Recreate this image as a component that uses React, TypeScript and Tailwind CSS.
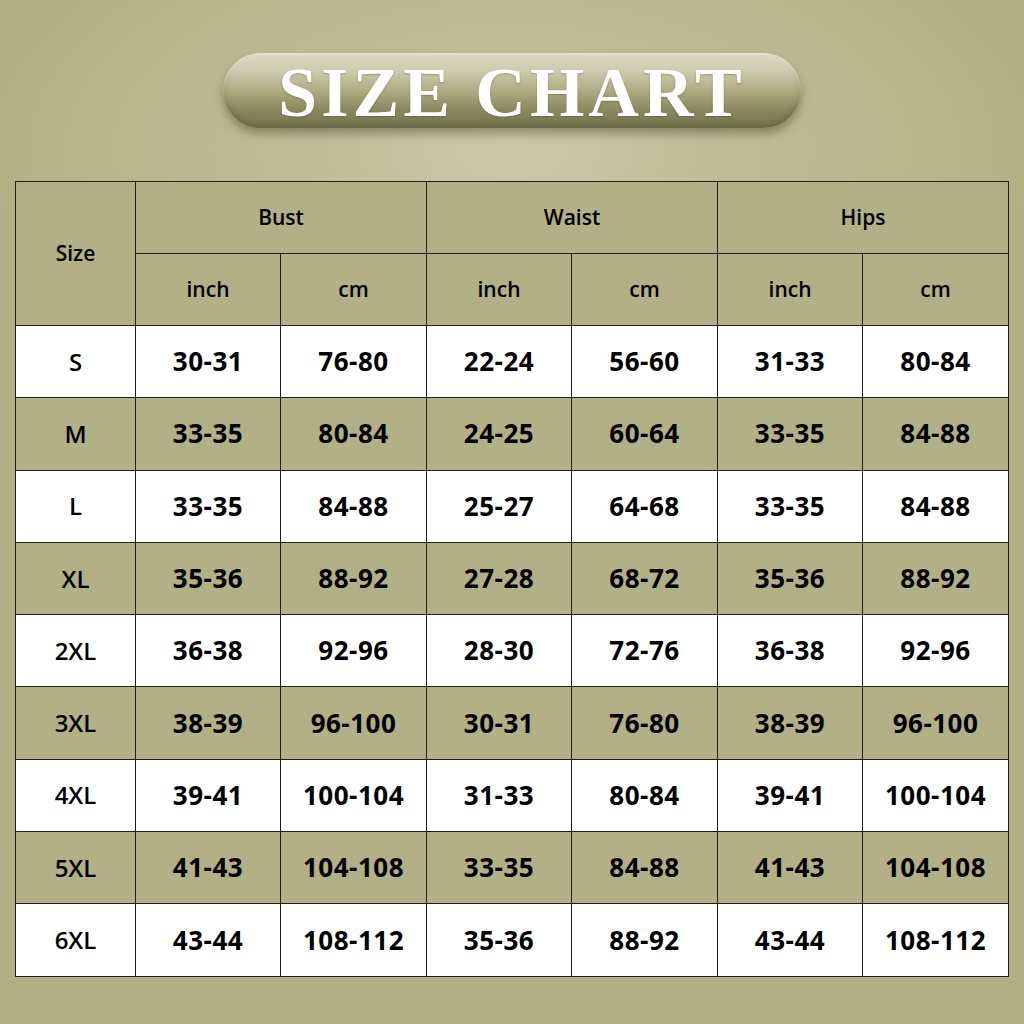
const rows = [
  ['S', '30-31', '76-80', '22-24', '56-60', '31-33', '80-84'],
  ['M', '33-35', '80-84', '24-25', '60-64', '33-35', '84-88'],
  ['L', '33-35', '84-88', '25-27', '64-68', '33-35', '84-88'],
  ['XL', '35-36', '88-92', '27-28', '68-72', '35-36', '88-92'],
  ['2XL', '36-38', '92-96', '28-30', '72-76', '36-38', '92-96'],
  ['3XL', '38-39', '96-100', '30-31', '76-80', '38-39', '96-100'],
  ['4XL', '39-41', '100-104', '31-33', '80-84', '39-41', '100-104'],
  ['5XL', '41-43', '104-108', '33-35', '84-88', '41-43', '104-108'],
  ['6XL', '43-44', '108-112', '35-36', '88-92', '43-44', '108-112'],
]

const groups = ['Bust', 'Waist', 'Hips']

export default function App() {
  return (
    <div className="relative w-[1024px] h-[1024px] overflow-hidden bg-[#b2b186] bg-[radial-gradient(ellipse_520px_260px_at_512px_150px,#cbcaa8_0%,#bdbc95_45%,#b2b186_100%)]">
      {/* title pill */}
      <div className="flex justify-center pt-[53px]">
        <div className="w-[578px] h-[75px] rounded-full bg-[linear-gradient(180deg,#dad9c1_0%,#cfcdb0_22%,#aeac83_50%,#8a895f_75%,#76764f_100%)] shadow-[0_6px_10px_rgba(70,70,40,0.45),inset_0_2px_3px_rgba(255,255,240,0.4),inset_0_-3px_6px_rgba(60,60,30,0.3)] flex items-center justify-center">
          <span className="text-white font-bold text-[70px] leading-none tracking-[4px] font-['Liberation_Serif',serif] [text-shadow:0_1px_2px_rgba(60,60,30,0.35)] pt-[4px]">
            SIZE CHART
          </span>
        </div>
      </div>

      {/* table */}
      <div className="absolute left-[15px] top-[181px]">
        <table className="border-collapse table-fixed w-[994px] font-['Open_Sans',sans-serif] text-black">
          <colgroup>
            <col className="w-[120px]" />
            <col className="w-[145px]" />
            <col className="w-[146px]" />
            <col className="w-[145px]" />
            <col className="w-[146px]" />
            <col className="w-[145px]" />
            <col className="w-[146px]" />
          </colgroup>
          <thead>
            <tr className="h-[72px] bg-[#b1b086]">
              <th
                rowSpan={2}
                className="border border-[#1f1f19] text-[21px] font-semibold"
              >
                Size
              </th>
              {groups.map((g) => (
                <th
                  key={g}
                  colSpan={2}
                  className="border border-[#1f1f19] text-[21px] font-semibold"
                >
                  {g}
                </th>
              ))}
            </tr>
            <tr className="h-[72px] bg-[#b1b086]">
              {groups.map((g) => [
                <th
                  key={g + 'in'}
                  className="border border-[#1f1f19] text-[21px] font-semibold"
                >
                  inch
                </th>,
                <th
                  key={g + 'cm'}
                  className="border border-[#1f1f19] text-[21px] font-semibold"
                >
                  cm
                </th>,
              ])}
            </tr>
          </thead>
          <tbody>
            {rows.map((row, i) => (
              <tr
                key={row[0]}
                className={
                  i % 2 === 0 ? 'h-[72.3px] bg-white' : 'h-[72.3px] bg-[#b1b086]'
                }
              >
                {row.map((cell, j) => (
                  <td
                    key={j}
                    className={
                      j === 0
                        ? 'border border-[#1f1f19] text-center font-semibold text-[24px]'
                        : 'border border-[#1f1f19] text-center font-bold text-[26px] tracking-[0.5px]'
                    }
                  >
                    {cell}
                  </td>
                ))}
              </tr>
            ))}
          </tbody>
        </table>
      </div>
    </div>
  )
}
